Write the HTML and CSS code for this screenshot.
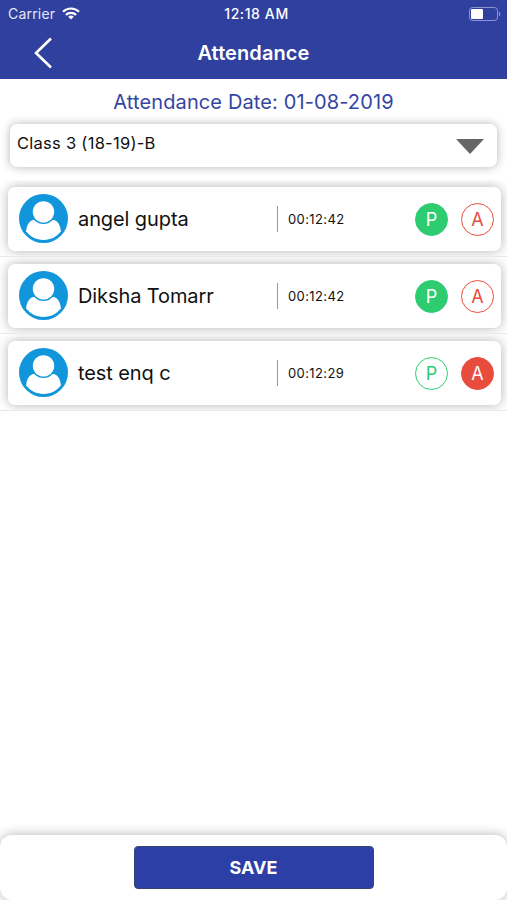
FILE: index.html
```html
<!DOCTYPE html>
<html lang="en">
<head>
    <meta charset="UTF-8">
    <meta name="viewport" content="width=device-width, initial-scale=1.0">
    <title>Attendance</title>
    <link rel="stylesheet" href="styles.css">
</head>
<body>
    <svg class="sprite" width="0" height="0">
        <symbol id="avatar" viewBox="0 0 48 48">
            <circle cx="24" cy="24" r="24" fill="#1296db"/>
            <path d="M13.500 25.500H34.500c3.800 1.500 6 5.500 6.500 11C37 42 31 45 24 45S11 42 7 36.500c.5-5.500 2.700-9.500 6.500-11z" fill="#fff"/>
            <circle cx="24" cy="17.500" r="12" fill="#1296db"/>
            <circle cx="24" cy="17.500" r="10.500" fill="#fff"/>
        </symbol>
    </svg>

    <header class="header">
        <div class="status-bar">
            <div class="carrier">
                <span>Carrier</span>
                <svg width="18" height="13" viewBox="0 0 18 13" fill="none" stroke="#fff" stroke-width="2.200">
                    <path d="M1 4.800a11.300 11.300 0 0 1 16 0"/>
                    <path d="M3.900 7.900a7.200 7.200 0 0 1 10.200 0"/>
                    <path d="M9 12.500L6.200 9.800a4 4 0 0 1 5.600 0z" fill="#fff" stroke="none"/>
                </svg>
            </div>
            <span class="clock">12:18 AM</span>
            <svg class="battery" width="32" height="14" viewBox="0 0 32 14">
                <rect x=".5" y=".5" width="28" height="13" rx="3" fill="none" stroke="#8c95cf"/>
                <rect x="2" y="2" width="12" height="10" rx="1" fill="#fff"/>
                <path d="M30 4.700c1.700.6 1.700 4 0 4.600z" fill="#8c95cf"/>
            </svg>
        </div>
        <div class="nav-bar">
            <svg class="back" width="20" height="32" viewBox="0 0 20 32" fill="none" stroke="#fff" stroke-width="2.600">
                <path d="M18 1.500L3 16l15 14.500"/>
            </svg>
            <h1>Attendance</h1>
        </div>
    </header>

    <main>
        <div class="date">Attendance Date: 01-08-2019</div>

        <div class="class-select">
            <span>Class 3 (18-19)-B</span>
            <svg width="28" height="15" viewBox="0 0 28 15"><path d="M0 0h28L14 15z" fill="#666"/></svg>
        </div>

        <div class="list">
            <div class="row">
                <div class="card">
                    <svg class="avatar"><use href="#avatar"/></svg>
                    <span class="name">angel gupta</span>
                    <span class="time">00:12:42</span>
                    <span class="mark present active">P</span>
                    <span class="mark absent">A</span>
                </div>
            </div>
            <div class="row">
                <div class="card">
                    <svg class="avatar"><use href="#avatar"/></svg>
                    <span class="name">Diksha Tomarr</span>
                    <span class="time">00:12:42</span>
                    <span class="mark present active">P</span>
                    <span class="mark absent">A</span>
                </div>
            </div>
            <div class="row">
                <div class="card">
                    <svg class="avatar"><use href="#avatar"/></svg>
                    <span class="name">test enq c</span>
                    <span class="time">00:12:29</span>
                    <span class="mark present">P</span>
                    <span class="mark absent active">A</span>
                </div>
            </div>
        </div>
    </main>

    <footer class="footer">
        <button type="button">SAVE</button>
    </footer>
</body>
</html>
```
FILE: styles.css
```css
* {
    box-sizing: border-box;
}
body {
    font-family: Inter, "Liberation Sans", sans-serif;
    background-color: #fff;
    color: #111;
    margin: 0;
    height: 900px;
    display: flex;
    flex-direction: column;
    overflow: hidden;
}
.sprite {
    display: none;
}
.header {
    height: 79px;
    background-color: #2f409f;
    color: #fff;
}
.status-bar {
    display: grid;
    grid-template-columns: 1fr auto 1fr;
    align-items: center;
    height: 27px;
    padding: 0 6px 0 8px;
    font-size: 14px;
}
.carrier {
    display: flex;
    align-items: center;
    gap: 7px;
    color: #e3e6f7;
    letter-spacing: 0.2px;
}
.clock {
    margin-left: 4px;
    font-weight: 500;
    letter-spacing: 0.6px;
}
.battery {
    justify-self: end;
}
.nav-bar {
    display: grid;
    grid-template-columns: 1fr auto 1fr;
    align-items: center;
    height: 51px;
}
.back {
    margin-left: 33px;
}
h1 {
    margin: 0;
    font-size: 20px;
    font-weight: 600;
    letter-spacing: 0.1px;
}
main {
    flex: 1;
}
.date {
    height: 45px;
    line-height: 46px;
    text-align: center;
    color: #3545a3;
    font-size: 20px;
    letter-spacing: 0.12px;
}
.class-select {
    display: flex;
    justify-content: space-between;
    height: 43px;
    margin: 0 10px;
    padding: 9px 13px 0 7px;
    background-color: #fff;
    border-radius: 7px;
    box-shadow: 0 0 10px rgba(0, 0, 0, 0.3);
    font-size: 16.5px;
    line-height: 20px;
    letter-spacing: 0.27px;
}
.class-select svg {
    margin-top: 6px;
}
.list {
    margin-top: 13px;
}
.row {
    height: 77px;
    padding: 7px 6px 5px 8px;
    border-bottom: 1px solid #e8e8e8;
    overflow: hidden;
}
.card {
    display: flex;
    align-items: center;
    height: 64px;
    padding: 0 7px 0 11px;
    background-color: #fff;
    border-radius: 7px;
    box-shadow: 0 0 12px rgba(0, 0, 0, 0.3);
}
.avatar {
    width: 49px;
    height: 49px;
    margin-bottom: 1px;
}
.name {
    flex: 1;
    margin-left: 10px;
    font-size: 20px;
    letter-spacing: -0.1px;
}
.time {
    width: 138px;
    padding-left: 10px;
    border-left: 1px solid #999;
    font-size: 13px;
    line-height: 26px;
    letter-spacing: 0.38px;
}
.mark {
    width: 33px;
    height: 33px;
    border: 1.5px solid;
    border-radius: 50%;
    font-size: 18px;
    line-height: 31px;
    text-align: center;
}
.present {
    color: #2ecc71;
}
.absent {
    margin-left: 13px;
    color: #e74c3c;
}
.mark.active {
    color: #fff;
}
.present.active {
    background-color: #2ecc71;
    border-color: #2ecc71;
}
.absent.active {
    background-color: #e74c3c;
    border-color: #e74c3c;
}
.footer {
    display: flex;
    justify-content: center;
    height: 65px;
    padding-top: 11px;
    background-color: #fff;
    border-radius: 12px;
    box-shadow: 0 0 12px rgba(0, 0, 0, 0.3);
}
button {
    width: 240px;
    height: 43px;
    background-color: #2c3fa7;
    color: #fff;
    border: 1px solid #39456f;
    border-radius: 4px;
    font-family: inherit;
    font-size: 18px;
    font-weight: 700;
}
```
